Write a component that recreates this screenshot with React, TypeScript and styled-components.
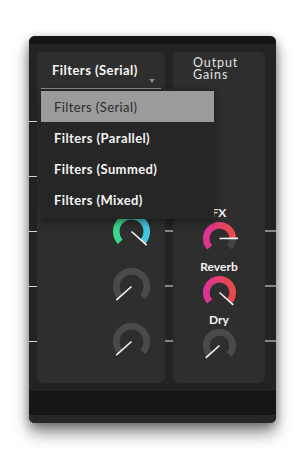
import React from "react";
import styled, { createGlobalStyle } from "styled-components";

const GlobalStyle = createGlobalStyle`
  html, body {
    margin: 0;
    padding: 0;
    background: #ffffff;
  }
  body {
    font-family: Lato, "Liberation Sans", sans-serif;
  }
`;

const Page = styled.div`
  padding: 36px 29px;
  width: 247px;
`;

const Window = styled.div`
  width: 247px;
  border-radius: 6px;
  overflow: hidden;
  background: #232323;
  box-shadow: 0 10px 16px rgba(0, 0, 0, 0.45), 0 2px 8px rgba(0, 0, 0, 0.3);
`;

const TopBar = styled.div`
  height: 8px;
  background: #151515;
`;

const Body = styled.div`
  display: grid;
  grid-template-columns: 8px 128px 8px 92px 11px;
  padding: 8px 0;
`;

const Footer = styled.div`
  height: 24px;
  background: #161616;
  border-bottom: 8px solid #272727;
`;

const Gutter = styled.div`
  display: flex;
  flex-direction: column;
  padding-top: 41.5px;
`;

const TickSlot = styled.div`
  height: 55px;
  display: flex;
  align-items: center;
`;

const Tick = styled.div<{ $light?: boolean }>`
  width: 100%;
  height: ${(p) => (p.$light ? "1px" : "2px")};
  background: ${(p) => (p.$light ? "#d6d6d6" : "#858585")};
`;

const Panel = styled.div`
  background: #2e2e2e;
  border-radius: 6px;
  display: flex;
  flex-direction: column;
  height: 331px;
`;

const DropdownWrap = styled.div`
  position: relative;
  margin: 0 4px;
`;

const DropdownButton = styled.div`
  display: flex;
  flex-direction: column;
  padding: 10px 6px 5px 11px;
  border-bottom: 1px solid #8c8c8c;
`;

const DropdownText = styled.span`
  font-size: 13px;
  line-height: 16px;
  font-weight: 700;
  color: #f6f6f6;
  letter-spacing: 0.45px;
`;

const Arrow = styled.span`
  align-self: flex-end;
  margin-top: 1px;
  width: 0;
  height: 0;
  border-left: 3px solid transparent;
  border-right: 3px solid transparent;
  border-top: 4px solid #8a8a8a;
`;

const Menu = styled.div`
  position: absolute;
  left: 0;
  top: 100%;
  width: 173px;
  padding: 2px 0 4px;
  background: #262626;
  box-shadow: 0 3px 8px rgba(0, 0, 0, 0.45);
  z-index: 2;
`;

const MenuItem = styled.div<{ $active?: boolean }>`
  height: 31px;
  display: flex;
  align-items: center;
  padding-left: 13px;
  font-size: 13px;
  letter-spacing: 0.4px;
  font-weight: ${(p) => (p.$active ? 400 : 700)};
  color: ${(p) => (p.$active ? "#2b2b2b" : "#f4f4f4")};
  background: ${(p) => (p.$active ? "#9b9b9b" : "transparent")};
`;

const KnobRows = styled.div`
  display: flex;
  flex-direction: column;
  margin-top: 4.5px;
`;

const KnobRow = styled.div`
  height: 55px;
  display: flex;
  align-items: center;
  justify-content: flex-end;
  padding-right: 12px;
`;

const Title = styled.div`
  padding: 5px 0 0 20px;
  font-size: 12.5px;
  line-height: 12px;
  font-weight: 400;
  color: #e2e2e2;
  letter-spacing: 0.9px;
`;

const Gains = styled.div`
  margin-top: auto;
  display: flex;
  flex-direction: column;
  gap: 1.5px;
  padding-bottom: 18px;
`;

const GainGroup = styled.div`
  display: flex;
  flex-direction: column;
  align-items: center;
`;

const GainLabel = styled.span`
  font-size: 12px;
  line-height: 14px;
  font-weight: 700;
  color: #f4f4f4;
  margin-bottom: -1px;
`;

type Palette = "teal" | "pink" | "gray";

const GRADIENTS: Record<Palette, [string, string]> = {
  teal: ["#3bd985", "#43c6e6"],
  pink: ["#dc3393", "#ea4a48"],
  gray: ["#4a4a4a", "#4a4a4a"],
};

const START = -132;
const END = 132;

const pt = (c: number, r: number, a: number) => {
  const rad = (a * Math.PI) / 180;
  return [c + r * Math.sin(rad), c - r * Math.cos(rad)];
};

const arc = (c: number, r: number, a0: number, a1: number) => {
  const [x0, y0] = pt(c, r, a0);
  const [x1, y1] = pt(c, r, a1);
  const large = a1 - a0 > 180 ? 1 : 0;
  return `M ${x0} ${y0} A ${r} ${r} 0 ${large} 1 ${x1} ${y1}`;
};

let gradId = 0;

const Knob = ({
  size,
  value,
  palette,
}: {
  size: number;
  value: number;
  palette: Palette;
}) => {
  const id = React.useMemo(() => `kg${gradId++}`, []);
  const box = size + 6;
  const c = box / 2;
  const sw = 6.5;
  const r = size / 2 - sw / 2;
  const angle = START + (END - START) * value;
  const [px, py] = pt(c, size / 2 + 2, angle);
  const [a, b] = GRADIENTS[palette];
  return (
    <svg width={box} height={box} viewBox={`0 0 ${box} ${box}`}>
      <defs>
        <linearGradient id={id} x1="0" y1="0" x2="1" y2="0">
          <stop offset="0" stopColor={a} />
          <stop offset="1" stopColor={b} />
        </linearGradient>
      </defs>
      <path d={arc(c, r, START, END)} stroke="#454545" strokeWidth={sw} fill="none" />
      {palette !== "gray" && value > 0 && (
        <path
          d={arc(c, r, START, angle)}
          stroke={`url(#${id})`}
          strokeWidth={sw}
          fill="none"
        />
      )}
      {palette === "gray" && (
        <path d={arc(c, r, START, END)} stroke="#4a4a4a" strokeWidth={sw} fill="none" />
      )}
      <line x1={c} y1={c} x2={px} y2={py} stroke="#f4f4f4" strokeWidth={1.6} />
    </svg>
  );
};

const modes = ["Filters (Serial)", "Filters (Parallel)", "Filters (Summed)", "Filters (Mixed)"];

const leftKnobs: { value: number; palette: Palette }[] = [
  { value: 0, palette: "gray" },
  { value: 0, palette: "gray" },
  { value: 1, palette: "teal" },
  { value: 0, palette: "gray" },
  { value: 0, palette: "gray" },
];

const gains: { label: string; value: number; palette: Palette }[] = [
  { label: "FX", value: 0.84, palette: "pink" },
  { label: "Reverb", value: 1, palette: "pink" },
  { label: "Dry", value: 0, palette: "gray" },
];

const Ticks = ({ count, hidden = 0, light }: { count: number; hidden?: number; light?: boolean }) => (
  <Gutter>
    {Array.from({ length: count }).map((_, i) => (
      <TickSlot key={i}>{i >= hidden && <Tick $light={light} />}</TickSlot>
    ))}
  </Gutter>
);

export default function App() {
  return (
    <Page>
      <GlobalStyle />
      <Window>
        <TopBar />
        <Body>
          <Ticks count={5} light />
          <Panel>
            <DropdownWrap>
              <DropdownButton>
                <DropdownText>Filters (Serial)</DropdownText>
                <Arrow />
              </DropdownButton>
              <Menu>
                {modes.map((m, i) => (
                  <MenuItem key={m} $active={i === 0}>
                    {m}
                  </MenuItem>
                ))}
              </Menu>
            </DropdownWrap>
            <KnobRows>
              {leftKnobs.map((k, i) => (
                <KnobRow key={i}>
                  <Knob size={37} value={k.value} palette={k.palette} />
                </KnobRow>
              ))}
            </KnobRows>
          </Panel>
          <Ticks count={5} />
          <Panel>
            <Title>
              Output
              <br />
              Gains
            </Title>
            <Gains>
              {gains.map((g) => (
                <GainGroup key={g.label}>
                  <GainLabel>{g.label}</GainLabel>
                  <Knob size={33} value={g.value} palette={g.palette} />
                </GainGroup>
              ))}
            </Gains>
          </Panel>
          <Ticks count={5} hidden={2} />
        </Body>
        <Footer />
      </Window>
    </Page>
  );
}
